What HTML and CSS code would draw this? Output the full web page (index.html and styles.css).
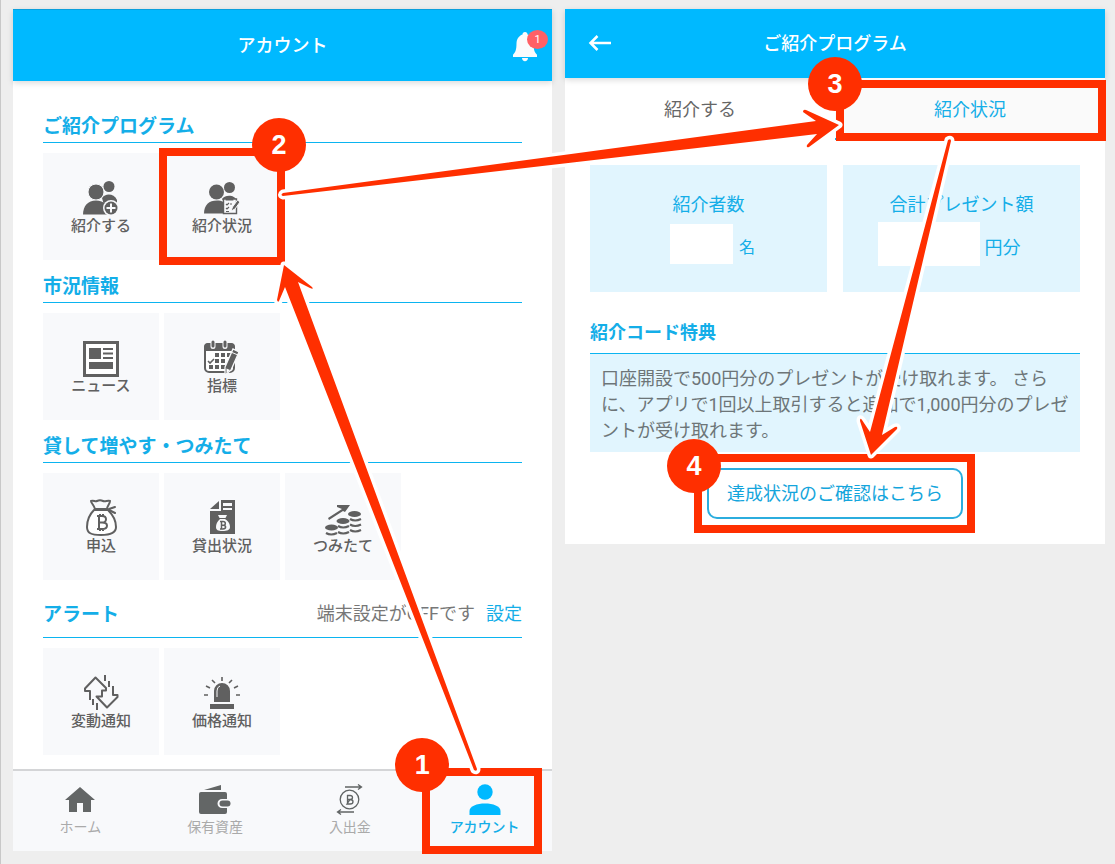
FILE: index.html
```html
<!DOCTYPE html>
<html lang="ja">
<head>
<meta charset="utf-8">
<meta name="viewport" content="width=device-width, initial-scale=1">
<title>ご紹介プログラム</title>
<link rel="stylesheet" href="styles.css">
</head>
<body>
<main class="board">
  <section class="phone">
    <header class="bar bar-account">
      <h1 class="bar-title">アカウント</h1>
      <button class="bell" type="button" aria-label="お知らせ">
        <svg width="24" height="30" viewBox="0 0 24 30" fill="#fafbfc"><path d="M12 0c-1.600 0-2.500 1.200-2.500 2.600C5.500 4 3.500 7.500 3.500 11.500c0 6-1 9-3.500 11.200V25h24v-2.300c-2.500-2.200-3.500-5.200-3.500-11.200 0-4-2-7.500-6-8.900C14.500 1.200 13.600 0 12 0zM9 26h6c0 2-1.300 3.200-3 3.200S9 28 9 26z"/></svg>
        <span class="bell-count">1</span>
      </button>
    </header>
    <div class="account">
      <section class="group">
        <h2 class="group-title">ご紹介プログラム</h2>
        <div class="cards">
          <a class="card" href="#refer">
            <svg class="card-icon" viewBox="0 0 38 38" fill="#606060"><circle cx="27" cy="7.500" r="5.500"/><path d="M20 19c3-5 12-5 15 2v5H22z"/><circle cx="14" cy="13" r="8" stroke="#f8f9fb"/><path d="M1 35.500C1 27 6 21.500 14 21.500s13 5 13 14z"/><circle cx="29" cy="29" r="8" fill="#f8f9fb"/><circle cx="29" cy="29" r="6.500"/><path d="M29 24.500v9M24.500 29h9" stroke="#f8f9fb" stroke-width="2"/></svg>
            <span class="card-label">紹介する</span>
          </a>
          <a class="card" href="#status">
            <svg class="card-icon" viewBox="0 0 38 38" fill="#606060"><circle cx="26.500" cy="8.500" r="5.500"/><path d="M19 20c4-5 13-4 15 2v3H22z"/><circle cx="13.500" cy="13" r="7.500"/><path d="M1 34.500C1 26 6 21.500 14 21.500c5 0 8 2 9 4v9z"/><path d="M20.500 20h13v14.500h-13z" fill="#f8f9fb" stroke="#606060" stroke-width="1.400"/><path d="M23.500 17.500h6l1 4h-8z"/><path d="M23 25l1 1 2-2M23 29l1 1 2-2M23 32.500h3M27 25h2" fill="none" stroke="#606060" stroke-width="1.100"/><path d="M28 32l1.500-4 5-7 2.500 2-5 7z" stroke="#f8f9fb" stroke-width="1"/></svg>
            <span class="card-label">紹介状況</span>
            <span class="frame frame-card"><b class="step step-2">2</b></span>
          </a>
        </div>
      </section>
      <section class="group">
        <h2 class="group-title">市況情報</h2>
        <div class="cards">
          <a class="card" href="#news">
            <svg class="card-icon" viewBox="0 0 38 38" fill="#606060"><path d="M2.500 3.500h33v33h-33z" fill="#fff" stroke="#606060" stroke-width="3"/><path d="M7 9h12v11H7zM21 9h10v2H21zM21 13.500h10v2H21zM21 18h10v2H21zM7 23h24v7H7z"/></svg>
            <span class="card-label">ニュース</span>
          </a>
          <a class="card" href="#index">
            <svg class="card-icon" viewBox="0 0 38 38" fill="#606060"><rect x="2" y="5" width="29" height="28" rx="4" fill="#fff" stroke="#606060" stroke-width="2"/><path d="M1 12V8q0-4 4-4h23q4 0 4 4v4z"/><path d="M10 1.500v6M22 1.500v6" stroke="#f8f9fb" stroke-width="5" stroke-linecap="round"/><path d="M10 3v4M22 3v4" stroke="#606060" stroke-width="3" stroke-linecap="round"/><path d="M12 14h4v4h-4zM18 14h4v4h-4zM24 14h4v4h-4zM12 20h4v4h-4zM18 20h4v4h-4zM6 26h4v4H6zM12 26h4v4h-4zM18 26h4v4h-4z"/><path d="M5 22l2 2 4-4" fill="none" stroke="#606060" stroke-width="1.600"/><path d="M22 28l8-18 6 3-8 18-6 5z" stroke="#f8f9fb" stroke-width="1.300"/><path d="M23.500 29.500l3.500 1.500-3.500 3z" fill="#fff"/><path d="M29 13.500l6 2.500" stroke="#f8f9fb"/></svg>
            <span class="card-label">指標</span>
          </a>
        </div>
      </section>
      <section class="group">
        <h2 class="group-title">貸して増やす・つみたて</h2>
        <div class="cards">
          <a class="card" href="#apply">
            <svg class="card-icon" viewBox="0 0 38 38" fill="none" stroke="#606060" stroke-width="2" stroke-linejoin="round" stroke-linecap="round"><path d="M12 11h14c4 4 8 10 8 17 0 6-5 8-15 8S5 34 5 28c0-7 3-13 7-17z" fill="#fff"/><path d="M13 10C12 6 9 4 9 2c3-1 4 1 6 0s4-1 6 0 5-1 7 0c0 3-3 5-3 8zM27 10l6-2M27 11l6 3"/><path d="M15 17h5q4 0 4 3.300t-4 3.200h-4M20 23.500q5 0 5 3.200t-5 3.300h-5M17 17v13M18 15v2M21 15v2M18 30v2M21 30v2" stroke-linecap="butt"/></svg>
            <span class="card-label">申込</span>
          </a>
          <a class="card" href="#lending">
            <svg class="card-icon" viewBox="0 0 38 38" fill="#606060"><path d="M18 1v11H7v23h25V1z"/><path d="M16 2v8H7z"/><path d="M20 4h9v3h-9zM20 9h9v2h-9z" fill="#f8f9fb"/><path d="M15 16h9l-2 4c4 3 5 5 5 8 0 3-3 4-7.500 4S13 31 13 28s1-5 4-8z" fill="#f8f9fb"/><path d="M16 19.500h7" stroke="#606060"/><path d="M17 22.500h3q2.300 0 2.300 1.900T20 26.200h-2M20 26.200q2.600 0 2.600 1.900T20 30h-3M18.500 22v8.500" fill="none" stroke="#606060" stroke-width="1.500"/></svg>
            <span class="card-label">貸出状況</span>
          </a>
          <a class="card" href="#saving">
            <svg class="card-icon" viewBox="0 0 38 38" fill="#606060"><path d="M4 19l14-9-5-2V6h13l-5 7-2-1-14 9z"/><ellipse cx="30.500" cy="15" rx="6.500" ry="3"/><ellipse cx="19" cy="22" rx="6.500" ry="3"/><ellipse cx="7.500" cy="28.500" rx="6.500" ry="3"/><path d="M26 20q5 3 11 0M26 25.500q5 3 11 0M26 31q5 3 11 0M14 27q5 3 11 0M14 33q5 3 11 0M2 34q5 3 11 0" fill="none" stroke="#606060" stroke-width="2.200"/></svg>
            <span class="card-label">つみたて</span>
          </a>
        </div>
      </section>
      <section class="group group-alert">
        <div class="group-title alert-title">
          <h2 class="alert-name">アラート</h2>
          <span class="alert-state">端末設定がOFFです</span>
          <a class="alert-link" href="#settings">設定</a>
        </div>
        <div class="cards">
          <a class="card" href="#change">
            <svg class="card-icon" viewBox="0 0 38 38" fill="none" stroke="#606060" stroke-width="2" stroke-linejoin="round"><path d="M8 26V17H3v-2.500L13.500 3.500 24 14v2.500h-4v6h-5.500l10.500 11L35.500 23v-2H31V12"/><path d="M23 1v6M27 7v6M11 25v6M15 29v7"/></svg>
            <span class="card-label">変動通知</span>
          </a>
          <a class="card" href="#price">
            <svg class="card-icon" viewBox="0 0 38 38" fill="#606060"><path d="M11 28V17a8 8 0 0 1 16 0v11zM7 30h24v5H7z"/><path d="M14 23v-6q0-4 3-5" fill="none" stroke="#f8f9fb" stroke-width="1"/><path d="M19 3v4M9 6l3 3M29 6l-3 3M3 12l4 2M35 12l-4 2M1 21h4M37 21h-4" stroke="#606060" stroke-width="1.600"/></svg>
            <span class="card-label">価格通知</span>
          </a>
        </div>
      </section>
    </div>
    <nav class="tabbar">
      <a class="tab" href="#home">
        <svg class="tab-icon" viewBox="0 0 32 32" fill="#636666"><path d="M16 3L1 16h4v12h8v-9h6v9h8V16h4z"/></svg>
        <span>ホーム</span>
      </a>
      <a class="tab" href="#assets">
        <svg class="tab-icon" viewBox="0 0 32 32" fill="#636666"><path d="M5 6L22 1v5zM2 8h24q2 0 2 2v5h-5a4.500 4.500 0 0 0 0 9h5v4q0 2-2 2H2q-2 0-2-2V10q0-2 2-2z"/><rect x="20.500" y="16.500" width="11" height="6" rx="3"/></svg>
        <span>保有資産</span>
      </a>
      <a class="tab" href="#transfer">
        <svg class="tab-icon" viewBox="0 0 32 32" fill="none" stroke="#606464" stroke-width="1.300"><circle cx="15.500" cy="15.500" r="9.300"/><path d="M11 3h16M24 .500L27.500 3 24 5.500M20 28H4M7 25.500L3.500 28 7 30.500"/><path d="M13 11.500h3q2.500 0 2.500 2t-2.500 2h-3M16 15.500q3 0 3 2.200t-3 2.300h-3zM13.500 11v9"/></svg>
        <span>入出金</span>
      </a>
      <a class="tab tab-on" href="#account" aria-current="page">
        <svg class="tab-icon" viewBox="0 0 32 32" fill="#00b9ff"><circle cx="16" cy="8" r="7.700"/><path d="M.5 31v-4C.5 22 8 19.500 16 19.500S31.500 22 31.500 27v4z"/></svg>
        <span>アカウント</span>
        <span class="frame frame-tab"><b class="step step-1">1</b></span>
      </a>
    </nav>
  </section>

  <section class="phone">
    <header class="bar bar-program">
      <button class="back" type="button" aria-label="戻る">
        <svg width="24" height="18" viewBox="0 0 24 18" fill="none" stroke="#fff" stroke-width="2.500"><path d="M23 8H2M9.500 1L2.500 8l7 7"/></svg>
      </button>
      <h1 class="bar-title">ご紹介プログラム</h1>
    </header>
    <nav class="switch">
      <a class="switch-item" href="#refer">紹介する</a>
      <a class="switch-item switch-on" href="#status">紹介状況<span class="frame frame-switch"><b class="step step-3">3</b></span></a>
    </nav>
    <div class="program">
      <div class="totals">
        <div class="total">
          <h2 class="total-name">紹介者数</h2>
          <p class="total-value value-count"><span class="blank blank-count"></span><span class="unit unit-small">名</span></p>
        </div>
        <div class="total">
          <h2 class="total-name">合計プレゼント額</h2>
          <p class="total-value value-amount"><span class="blank blank-amount"></span><span class="unit">円分</span></p>
        </div>
      </div>
      <h2 class="benefit-title">紹介コード特典</h2>
      <p class="benefit">口座開設で500円分のプレゼントが受け取れます。 さらに、アプリで1回以上取引すると追加で1,000円分のプレゼントが受け取れます。</p>
      <div class="action">
        <button class="confirm" type="button">達成状況のご確認はこちら</button>
        <span class="frame frame-action"><b class="step step-4">4</b></span>
      </div>
    </div>
  </section>

  <svg class="arrows" viewBox="0 0 1115 864" preserveAspectRatio="none" aria-hidden="true">
    <path d="M474 770L285 287L279 301Q278 303 277 300L284 265L312 287Q314 290 310 288L298 282L477 769Q477 772 474 770z"/>
    <path d="M283 193L816 121L803 112Q803 109 806 110L839 125L809 147Q806 148 807 145L817 134L283 196Q280 195 283 193z"/>
    <path d="M948 140L870 432L862 420Q860 417 860 421L871 455L897 429Q898 426 895 427L882 435L951 141Q951 138 948 140z"/>
  </svg>
</main>
</body>
</html>
```
FILE: styles.css
```css
* {
  box-sizing: border-box;
}

body {
  margin: 0;
  background: #eee;
  color: #666;
  font-family: Roboto, "Noto Sans CJK JP", sans-serif;
  font-size: 18px;
  line-height: 26px;
}

h1, h2, p {
  margin: 0;
  font-size: inherit;
  font-weight: 400;
}

a {
  color: inherit;
  text-decoration: none;
}

button {
  border: 0;
  padding: 0;
  background: none;
  font: inherit;
}

svg {
  display: block;
}

.board {
  position: relative;
  display: grid;
  grid-template-columns: 539fr 540fr;
  gap: 13px;
  align-items: start;
  padding: 9px 10px 13px 12px;
  border-left: 1px solid #c8c8c8;
}

.phone {
  background: #fff;
}

.bar {
  position: relative;
  display: flex;
  align-items: center;
  justify-content: center;
  background: #00b9ff;
  color: #fff;
  box-shadow: 0 2px 6px rgba(0, 0, 0, 0.15);
}

.bar-account {
  height: 72px;
  padding-top: 1px;
  border-top: 1px solid #0a9fdc;
}

.bar-program {
  height: 69px;
}

.bar-title {
  font-weight: 500;
}

.bell {
  position: absolute;
  top: 22px;
  right: 15px;
}

.bell-count {
  position: absolute;
  top: -2px;
  right: -11px;
  width: 21px;
  height: 19px;
  border-radius: 50%;
  background: #ff6066;
  color: #fff;
  font-size: 11px;
  line-height: 20px;
}

.back {
  position: absolute;
  left: 23px;
}

.account {
  padding: 19px 30px 14px;
}

.group-title {
  padding: 13px 0 2px;
  margin-bottom: 10px;
  border-bottom: 1px solid #0bb4f0;
  color: #14aee8;
  font-size: 19px;
  font-weight: 700;
  line-height: 27px;
}

.alert-title {
  display: flex;
  align-items: center;
  padding: 19px 0 9px;
}

.alert-name {
  flex: 1;
  padding-top: 2px;
  font-weight: 700;
}

.alert-state {
  color: #777;
  font-size: 18px;
  font-weight: 400;
}

.alert-link {
  margin-left: 11px;
  font-size: 18px;
  font-weight: 400;
}

.cards {
  display: grid;
  grid-template-columns: repeat(4, 1fr);
  gap: 5px;
}

.card {
  position: relative;
  display: flex;
  flex-direction: column;
  align-items: center;
  height: 107px;
  padding-top: 26px;
  background: #f8f9fb;
  color: #606060;
  font-size: 15px;
  font-weight: 500;
  line-height: 18px;
}

.card-icon {
  width: 38px;
  height: 38px;
}

.tabbar {
  display: grid;
  grid-template-columns: repeat(4, 1fr);
  border-top: 2px solid #d4d5d7;
  background: #f8f9fb;
}

.tab {
  position: relative;
  display: flex;
  flex-direction: column;
  align-items: center;
  padding: 13px 0;
  color: #aaa;
  font-size: 14px;
  line-height: 22px;
}

.tab-icon {
  width: 32px;
  height: 32px;
}

.tab-on {
  color: #14aee8;
  font-weight: 500;
}

.switch {
  display: grid;
  grid-template-columns: 1fr 1fr;
}

.switch-item {
  position: relative;
  height: 62px;
  text-align: center;
  line-height: 64px;
}

.switch-on {
  border-bottom: 2px solid #14aee8;
  background: #fafafa;
  color: #14aee8;
}

.program {
  padding: 25px;
}

.totals {
  display: grid;
  grid-template-columns: 1fr 1fr;
  gap: 16px;
}

.total {
  height: 127px;
  padding-top: 27px;
  background: #e1f5fe;
  color: #14aee8;
  text-align: center;
}

.total-value {
  display: flex;
  align-items: center;
  justify-content: center;
  height: 44px;
  margin-top: 4px;
}

.value-count {
  gap: 6px;
  padding-left: 8px;
}

.value-amount {
  gap: 5px;
  padding-right: 25px;
}

.blank {
  background: #fff;
}

.blank-count {
  width: 63px;
  height: 40px;
}

.blank-amount {
  width: 102px;
  height: 44px;
}

.unit {
  padding-top: 8px;
}

.unit-small {
  font-size: 16px;
}

.benefit-title {
  padding: 28px 0 7px;
  border-bottom: 1px solid #0bb4f0;
  color: #14aee8;
  font-weight: 700;
}

.benefit {
  padding: 12px 8px 8px 11px;
  background: #e1f5fe;
  color: #6d7578;
}

.action {
  position: relative;
  width: fit-content;
  margin: 16px auto 0;
}

.confirm {
  display: block;
  height: 51px;
  padding: 0 18px;
  border: 2px solid #2badde;
  border-radius: 10px;
  background: #fff;
  color: #14a5dc;
}

.frame {
  position: absolute;
  z-index: 1;
  border: 8px solid #ff2f00;
  pointer-events: none;
}

.frame-tab {
  inset: -3px 10px -3px 5px;
}

.frame-card {
  inset: -5px;
}

.frame-switch {
  inset: 2px -1px -3px 1px;
}

.frame-action {
  inset: -14px -12px -14px -13px;
}

.step {
  position: absolute;
  width: 54px;
  height: 54px;
  border-radius: 50%;
  background: #ff2f00;
  color: #fff;
  font-family: "Liberation Sans", sans-serif;
  font-size: 27px;
  font-weight: 700;
  line-height: 54px;
  text-align: center;
}

.step-1 {
  top: -38px;
  left: -35px;
}

.step-2 {
  top: -38px;
  right: -29px;
}

.step-3 {
  top: -31px;
  left: -36px;
}

.step-4 {
  top: -23px;
  left: -35px;
}

.arrows {
  position: absolute;
  z-index: 2;
  top: 0;
  left: -1px;
  width: calc(100% + 1px);
  height: 100%;
  pointer-events: none;
  fill: #ff2f00;
  stroke: #fff;
  stroke-width: 7;
  stroke-linejoin: round;
  paint-order: stroke;
}
```
